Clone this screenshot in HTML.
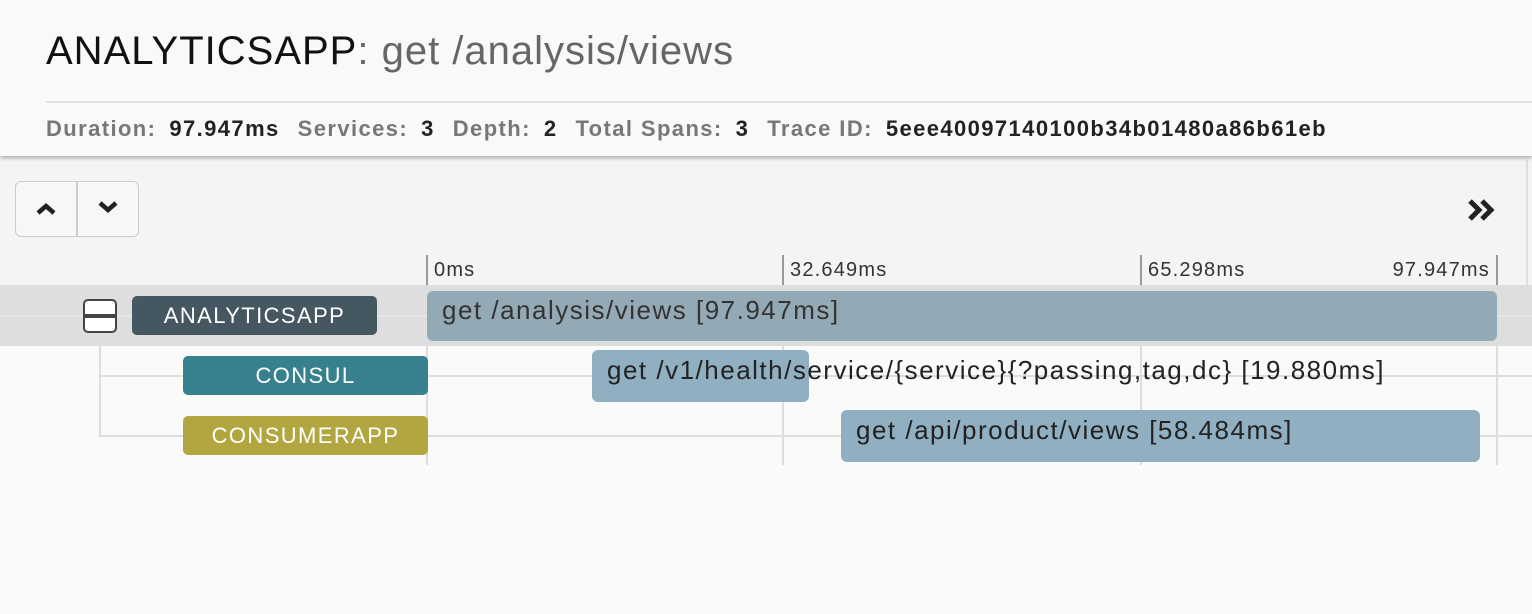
<!DOCTYPE html>
<html><head><style>
*{margin:0;padding:0;box-sizing:border-box}
body{width:1532px;height:614px;background:#fafafa;font-family:"Liberation Sans",sans-serif;position:relative;overflow:hidden}
.a{position:absolute}
.hdr{left:0;top:0;width:1532px;height:156px;background:#f9f9f9;box-shadow:0 2px 4px rgba(0,0,0,.3);z-index:2}
.t{left:46px;top:29px;font-size:40px;letter-spacing:1px;color:#666;white-space:nowrap}
.t b{font-weight:normal;color:#111}
.st{left:46px;top:116px;font-size:22px;letter-spacing:1.4px;font-weight:bold;color:#777;white-space:nowrap}
.st span{color:#222;margin:0 18px 0 13px}
.lbl{color:#fff;font-size:22px;letter-spacing:1.4px;text-align:center;border-radius:5px;line-height:39px;height:39px}
.bar{border-radius:6px}
.bt{font-size:26px;letter-spacing:1.5px;color:#222;white-space:nowrap}
.gl{background:#ddd;width:2px}
.tk{font-size:20px;letter-spacing:1.2px;color:#333}
</style></head><body>
<div class="a hdr">
<div class="a t"><b>ANALYTICSAPP</b>: get /analysis/views</div>
<div class="a" style="left:46px;top:101px;width:1486px;height:2px;background:#e2e2e2"></div>
<div class="a st">Duration:<span>97.947ms</span>Services:<span>3</span>Depth:<span>2</span>Total Spans:<span>3</span>Trace ID:<span>5eee40097140100b34b01480a86b61eb</span></div>
</div>
<div class="a" style="left:0;top:156px;width:1532px;height:129px;background:#f4f4f4"></div>
<div class="a" style="left:1526px;top:160px;width:2px;height:186px;background:#ddd"></div>
<div class="a" style="left:15px;top:181px;width:124px;height:56px;border:1.5px solid #ccc;border-radius:6px;background:#f7f7f7"></div>
<div class="a" style="left:76px;top:182px;width:1.5px;height:54px;background:#ccc"></div>
<svg class="a" style="left:35px;top:201px" width="22" height="16"><path d="M3 12 L11 5 L19 12" fill="none" stroke="#222" stroke-width="4.5"/></svg>
<svg class="a" style="left:97px;top:199px" width="22" height="16"><path d="M3 4 L11 11 L19 4" fill="none" stroke="#222" stroke-width="4.5"/></svg>
<svg class="a" style="left:1467px;top:198px" width="32" height="24"><path d="M3 3 L12 12 L3 21 M15 3 L24 12 L15 21" fill="none" stroke="#222" stroke-width="5"/></svg>
<div class="a gl" style="left:426px;top:255px;height:30px;background:#999"></div>
<div class="a gl" style="left:782px;top:255px;height:30px;background:#999"></div>
<div class="a gl" style="left:1140px;top:255px;height:30px;background:#999"></div>
<div class="a gl" style="left:1496px;top:255px;height:30px;background:#999"></div>
<div class="a tk" style="left:434px;top:259px">0ms</div>
<div class="a tk" style="left:790px;top:259px">32.649ms</div>
<div class="a tk" style="left:1148px;top:259px">65.298ms</div>
<div class="a tk" style="right:42px;top:259px">97.947ms</div>
<div class="a" style="left:0;top:285px;width:1532px;height:61px;background:#dedede"></div>
<div class="a gl" style="left:426px;top:285px;height:180px"></div>
<div class="a gl" style="left:782px;top:285px;height:180px"></div>
<div class="a gl" style="left:1140px;top:285px;height:180px"></div>
<div class="a gl" style="left:1496px;top:285px;height:180px"></div>
<div class="a" style="left:0;top:315px;width:1532px;height:2px;background:#e6e6e6"></div>
<div class="a" style="left:100px;top:375px;width:1432px;height:2px;background:#ddd"></div>
<div class="a" style="left:100px;top:435px;width:1432px;height:2px;background:#ddd"></div>
<div class="a" style="left:99px;top:346px;width:2px;height:91px;background:#ddd"></div>
<div class="a" style="left:83px;top:299px;width:34px;height:34px;border:2px solid #444;border-radius:5px;background:#fff"></div>
<div class="a" style="left:85px;top:314px;width:30px;height:4px;background:#444"></div>
<div class="a lbl" style="left:132px;top:296px;width:245px;background:#455761">ANALYTICSAPP</div>
<div class="a bar" style="left:427px;top:291px;width:1070px;height:50px;background:#93a9b5"></div>
<div class="a bt" style="left:442px;top:295px;color:#333">get /analysis/views [97.947ms]</div>
<div class="a lbl" style="left:183px;top:356px;width:245px;background:#37818f">CONSUL</div>
<div class="a bar" style="left:592px;top:350px;width:217px;height:52px;background:#90b0c1"></div>
<div class="a bt" style="left:607px;top:355px">get /v1/health/service/{service}{?passing,tag,dc} [19.880ms]</div>
<div class="a lbl" style="left:183px;top:416px;width:245px;background:#b2a641">CONSUMERAPP</div>
<div class="a bar" style="left:841px;top:410px;width:639px;height:52px;background:#90b0c1"></div>
<div class="a bt" style="left:856px;top:415px">get /api/product/views [58.484ms]</div>
</body></html>
